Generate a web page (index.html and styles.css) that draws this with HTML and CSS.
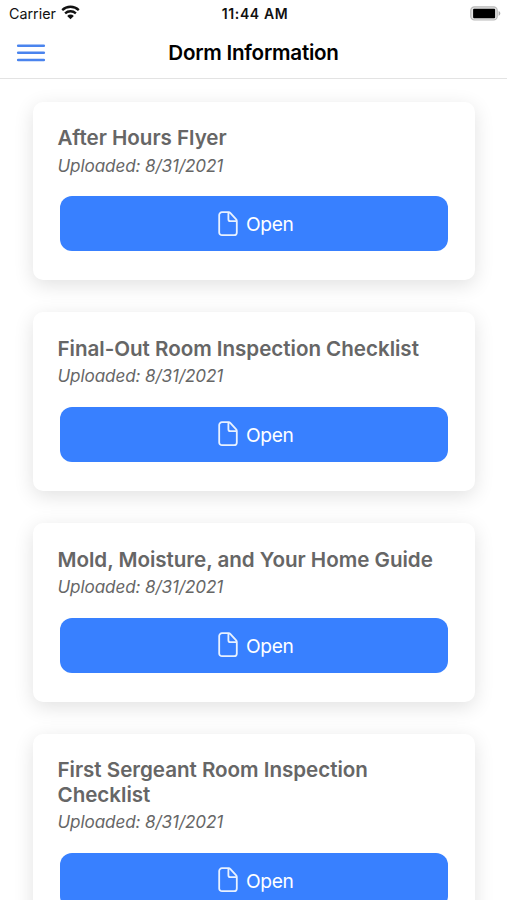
FILE: index.html
```html
<!DOCTYPE html>
<html lang="en">
<head>
<meta charset="utf-8">
<title>Dorm Information</title>
<link rel="stylesheet" href="styles.css">
</head>
<body>
<svg class="defs" width="0" height="0" aria-hidden="true">
  <symbol id="doc" viewBox="0 0 20 26">
    <path d="M10.8 1.2H4A2.8 2.8 0 0 0 1.2 4v17.4A2.8 2.8 0 0 0 4 24.2h12a2.8 2.8 0 0 0 2.8-2.8V9.9c0-.6-.2-1.1-.6-1.5l-6-6.6c-.4-.4-.8-.6-1.4-.6zM10.4 1.8v6.4a2 2 0 0 0 2 2h6" fill="none" stroke="currentColor" stroke-width="1.8" stroke-linecap="round" stroke-linejoin="round"/>
  </symbol>
</svg>
<header>
  <div class="status">
    <div class="carrier"><span>Carrier</span>
      <svg width="19" height="15" viewBox="0 0 19 15"><g fill="none" stroke="#111" stroke-width="2.3"><path d="M1.2 5.1a12 12 0 0 1 16.6 0"/><path d="M4.1 8.4a7.8 7.8 0 0 1 10.8 0"/></g><path d="M6.2 10.9a4.7 4.7 0 0 1 6.6 0L9.5 14.3z" fill="#111"/></svg>
    </div>
    <div class="time">11:44 AM</div>
    <svg class="battery" width="31" height="15" viewBox="0 0 31 15"><rect x=".8" y=".8" width="26.4" height="13.2" rx="3.6" fill="#e4e4e4" stroke="#b9b9b9" stroke-width="1.2"/><rect x="3.1" y="2.8" width="22" height="9.4" rx="1" fill="#000"/><path d="M28.6 5.1c2.3.9 2.3 3.9 0 4.8z" fill="#aaa"/></svg>
  </div>
  <div class="toolbar">
    <button class="menu" aria-label="Menu"><svg width="30" height="20" viewBox="0 0 30 20"><path d="M2.2 2.7h25.6M2.2 9.8h25.6M2.2 17h25.6" stroke="#4a84ee" stroke-width="2.6" stroke-linecap="round"/></svg></button>
    <h1>Dorm Information</h1>
  </div>
</header>
<main>
  <article class="card"><h2>After Hours Flyer</h2><p>Uploaded: 8/31/2021</p><button class="open"><svg width="20" height="26"><use href="#doc"/></svg><span>Open</span></button></article>
  <article class="card"><h2>Final-Out Room Inspection Checklist</h2><p>Uploaded: 8/31/2021</p><button class="open"><svg width="20" height="26"><use href="#doc"/></svg><span>Open</span></button></article>
  <article class="card"><h2>Mold, Moisture, and Your Home Guide</h2><p>Uploaded: 8/31/2021</p><button class="open"><svg width="20" height="26"><use href="#doc"/></svg><span>Open</span></button></article>
  <article class="card"><h2>First Sergeant Room Inspection Checklist</h2><p>Uploaded: 8/31/2021</p><button class="open"><svg width="20" height="26"><use href="#doc"/></svg><span>Open</span></button></article>
</main>
</body>
</html>
```

FILE: styles.css
```css
* { box-sizing: border-box; }
html, body { height: 100%; }
body { margin: 0; height: 900px; overflow: hidden; display: flex; flex-direction: column; background: #fff; font-family: Inter, "Liberation Sans", sans-serif; }
.defs { display: none; }
h1, h2, p { margin: 0; }
button { border: 0; padding: 0; background: none; font: inherit; }
header { flex: none; height: 79px; border-bottom: 1px solid #e3e3e3; }
.status { height: 27px; display: grid; grid-template-columns: 1fr auto 1fr; align-items: center; padding: 0 6px 0 9px; color: #111; }
.carrier { display: flex; align-items: center; gap: 5.5px; font-size: 14.3px; }
.carrier svg { margin-top: -2px; }
.time { font-size: 14px; font-weight: 600; letter-spacing: .6px; }
.battery { justify-self: end; }
.toolbar { height: 51px; display: grid; grid-template-columns: 1fr auto 1fr; align-items: center; padding: 0 16px; }
.menu { width: 30px; height: 20px; display: flex; }
h1 { font-size: 20.6px; line-height: 26px; font-weight: 600; letter-spacing: -.25px; color: #000; }
main { padding: 22.5px 32px 0 33px; display: flex; flex-direction: column; gap: 32.3px; }
.card { flex: none; padding: 24.5px 27px 29px 24.5px; border-radius: 10px; background: #fff; box-shadow: 0 5px 20px rgba(0,0,0,.12); }
h2 { font-size: 20.6px; line-height: 24.5px; font-weight: 600; letter-spacing: -.03px; color: #666; }
.card p { margin-top: 4px; font-size: 17.1px; line-height: 21px; letter-spacing: -.1px; font-style: italic; color: #666; }
.open { width: 388.5px; height: 55px; margin: 20.5px 0 0 2px; display: flex; align-items: center; justify-content: center; gap: 8px; border-radius: 12px; background: #3880ff; color: #fff; font-size: 19.2px; letter-spacing: -.4px; }
.open svg { color: #e8f1ff; margin-left: 4px; }
.open span { padding-top: 1px; }
```
